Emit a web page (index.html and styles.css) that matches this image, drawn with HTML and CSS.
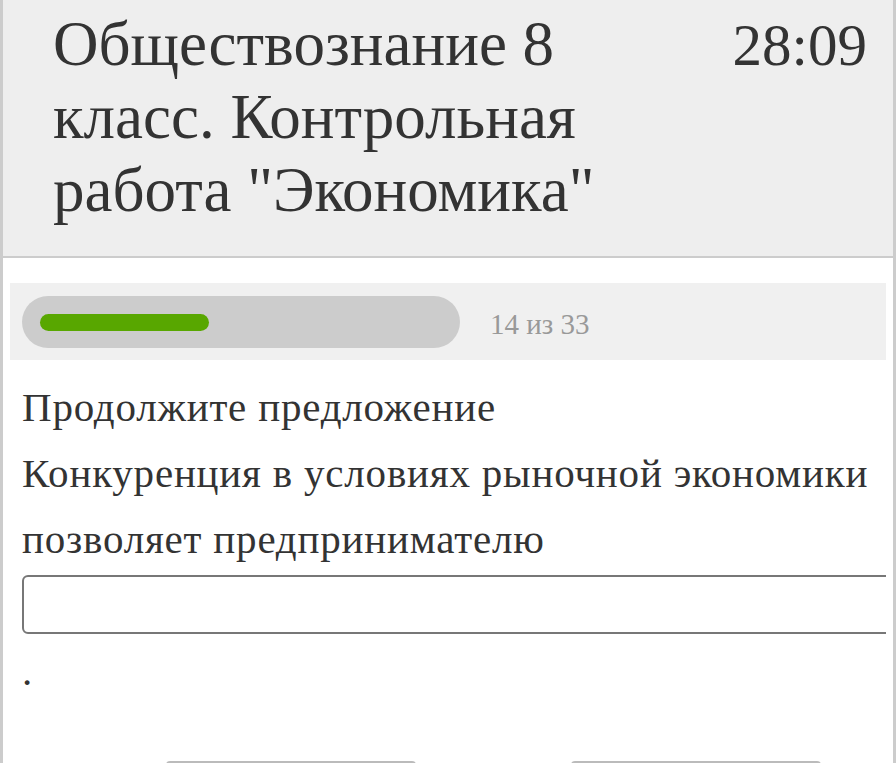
FILE: index.html
```html
<!DOCTYPE html>
<html lang="ru">

<head>
    <meta charset="UTF-8">
    <meta name="viewport" content="width=device-width, initial-scale=1.0">
    <title>Обществознание 8 класс. Контрольная работа "Экономика"</title>
    <link rel="stylesheet" href="styles.css">
</head>

<body>
    <div class="page">
        <div class="header">
            <h1 class="test-title">Обществознание 8 класс. Контрольная работа "Экономика"</h1>
            <div class="timer" id="timer">28:09</div>
        </div>

        <div class="main">
            <div class="progress">
                <div class="progress-track">
                    <div class="progress-fill" style="width: 42%;"></div>
                </div>
                <div class="progress-count">14 из 33</div>
            </div>

            <div class="question">
                <p class="question-lead">Продолжите предложение</p>
                <p class="question-text">Конкуренция в условиях рыночной экономики позволяет предпринимателю</p>
                <input type="text" class="answer-input" />
                <p class="question-end">.</p>
            </div>

            <div class="nav-buttons">
                <button class="nav-button"></button>
                <button class="nav-button"></button>
            </div>
        </div>
    </div>
</body>

</html>
```

FILE: styles.css
```css
body {
    margin: 0;
    padding: 0;
    font-family: "Liberation Serif", serif;
    color: #333;
    background-color: #fff;
    overflow: hidden;
}

.page {
    border-left: 3px solid #ccc;
    border-right: 3px solid #ccc;
    min-height: 100vh;
}

.header {
    display: flex;
    justify-content: space-between;
    align-items: flex-start;
    background-color: #eee;
    border-bottom: 2px solid #ccc;
    padding: 8px 26px 29px 50px;
}

.test-title {
    margin: 0;
    width: 640px;
    font-size: 63px;
    font-weight: normal;
    line-height: 73px;
}

.timer {
    font-size: 59px;
    line-height: 73px;
    padding-top: 1px;
}

.main {
    margin: 25px 7px 0 7px;
    overflow: hidden;
}

.progress {
    display: flex;
    align-items: center;
    gap: 30px;
    background-color: #f0f0f0;
    padding: 13px 12px 12px 12px;
}

.progress-track {
    width: 402px;
    height: 52px;
    padding: 0 18px;
    display: flex;
    align-items: center;
    background-color: #ccc;
    border-radius: 26px;
}

.progress-fill {
    height: 17px;
    background-color: #58a700;
    border-radius: 9px;
}

.progress-count {
    font-size: 29px;
    color: #999;
    padding-top: 4px;
}

.question {
    padding: 0 0 0 12px;
    font-size: 41px;
    letter-spacing: 0.8px;
    line-height: 66px;
}

.question p {
    margin: 0;
}

.question-lead {
    margin-top: 14px !important;
}

.answer-input {
    display: block;
    width: 900px;
    height: 59px;
    box-sizing: border-box;
    margin-top: 3px;
    border: 2px solid #777;
    border-radius: 6px;
    background-color: #fff;
}

.question-end {
    margin-top: 4px !important;
}

.nav-buttons {
    display: flex;
    gap: 155px;
    padding: 57px 0 0 156px;
}

.nav-button {
    width: 250px;
    height: 50px;
    border: 2px solid #bbb;
    border-radius: 4px;
    background-color: #fff;
}
```
